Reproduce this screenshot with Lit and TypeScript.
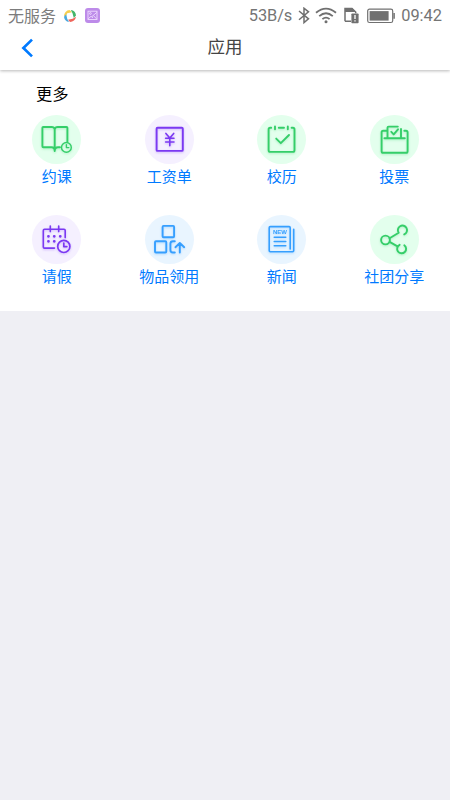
import { LitElement, html, css, svg } from "lit";
import { customElement } from "lit/decorators.js";

const clock = (x: number, y: number, r: number) => svg`
  <circle cx=${x} cy=${y} r=${r} />
  <path d="M${x} ${y - r * 0.55}V${y + 0.2}H${x + r * 0.5}" />`;

const apps = [
  { name: "约课", tone: "green", icon: svg`
    <path d="M22.7 14.2Q22.2 12 19.7 12H11.2Q10.4 12 10.4 12.8V31.3Q10.4 32.3 11.4 32.3H19.5Q22.7 32.3 22.7 36V14.2Q23.2 12 25.7 12H34.5Q35.4 12 35.4 12.8V26.4M28 32.3H26Q22.7 32.3 22.7 36" />
    <g stroke-width="1.4">${clock(34.4, 32.4, 4.9)}</g>` },
  { name: "工资单", tone: "purple", icon: svg`
    <rect x="11.6" y="12.7" width="26.2" height="23.2" rx="1" />
    <path d="M20.9 18.4L24.8 23L28.7 18.4M24.8 23V30.8M20.6 23.3H29M20.6 27H29" stroke-width="1.6" />` },
  { name: "校历", tone: "green", icon: svg`
    <path d="M14.2 12.8H13.2Q11.6 12.8 11.6 14.4V35.3Q11.6 36.9 13.2 36.9H35.9Q37.5 36.9 37.5 35.3V14.4Q37.5 12.8 35.9 12.8H34.6M18 11.4V14.2M30.8 11.4V14.2M21.8 12.8H27" />
    <path d="M19.2 23.6L23.8 28.2L32 20" />` },
  { name: "投票", tone: "green", icon: svg`
    <path d="M17.2 15.7H13.2Q11.6 15.7 11.6 17.3V36.2Q11.6 37.8 13.2 37.8H36Q37.6 37.8 37.6 36.2V17.3Q37.6 15.7 36 15.7H34.3M14.4 23.3H34.8M17.5 23V12.8Q17.5 11.6 18.7 11.6H27.8M31 14V23" />
    <path d="M21.3 16.8L23.7 19.4L28 14.3" />` },
  { name: "请假", tone: "purple", icon: svg`
    <path d="M33.2 22.6V15.5Q33.2 14.3 32 14.3H12.5Q11.3 14.3 11.3 15.5V31.9Q11.3 33.1 12.5 33.1H22.5M18.3 11V16.6M26.7 11V16.6" stroke-width="1.6" />
    <path d="M16.4 21.3h.1M22.2 21.3h.1M28.2 21.3h.1M16.4 26.3h.1M22.2 26.3h.1" stroke-width="2.7" />
    <g stroke-width="1.7">${clock(31.8, 31.4, 6.1)}</g>` },
  { name: "物品领用", tone: "blue", icon: svg`
    <rect x="17.6" y="10.9" width="11.5" height="11.4" rx="1" />
    <rect x="10" y="26.2" width="11.3" height="11.3" rx="1" />
    <path d="M29.8 26.2H27.9Q25.4 26.2 25.4 28.7V35Q25.4 37.5 27.9 37.5H29.8M34.8 37.6V28.2M30.4 32.2L34.8 27.9L39.2 32.2" />` },
  { name: "新闻", tone: "blue", icon: svg`
    <path d="M33.2 34V12.7Q33.2 11.6 32.1 11.6H13.3Q12.2 11.6 12.2 12.7V35.6Q12.2 36.7 13.3 36.7H35.6Q36.7 36.7 36.7 35.6V14.2" stroke-width="1.6" />
    <path d="M17.2 22.3H28.8M17.2 26.5H28.8M17.2 30.8H28.8" stroke-width="1.5" />
    <text x="22.9" y="19.3" text-anchor="middle" textLength="14">NEW</text>` },
  { name: "社团分享", tone: "green", icon: svg`
    <circle cx="15.5" cy="25" r="4.4" />
    <path d="M19.6 23.2L28.7 17.8A4.6 4.6 0 1 1 34.2 19.4M19.6 26.9L27.5 31.3M34.3 30.2A4.5 4.5 0 1 1 29.6 29.8" />` },
];

@customElement("app-root")
export class AppRoot extends LitElement {
  static styles = css`
    :host { display: block; height: 100vh; overflow: hidden; background: #efeff4; font-family: Roboto, "Noto Sans CJK SC", sans-serif; }
    svg { display: block; flex: none; }
    .header { height: 70px; background: #fff; box-shadow: 0 1px 3px rgba(0,0,0,.28); position: relative; }
    .status { display: flex; height: 30px; padding: 2px 8px 0; box-sizing: border-box; align-items: center; color: #757575; font-size: 16.4px; line-height: 28px; }
    .carrier { font-size: 16px; font-weight: 400; width: 48px; margin: 1px 7px 0 0; white-space: nowrap; color: #7c7c7c; }
    .photo { margin-left: 8px; margin-top: -2px; }
    .system { margin-left: auto; display: flex; align-items: center; }
    .rate { letter-spacing: -.1px; }
    .bluetooth { margin-left: 5px; }
    .wifi { margin-left: 4px; }
    .sim { margin-left: 7px; }
    .battery { margin-left: 8px; }
    .time { margin-left: 6px; }
    .nav { display: grid; grid-template-columns: 50px 1fr 50px; align-items: center; height: 35px; }
    .back { margin: 1px 0 0 20px; }
    .title { margin: -2px 0 0; text-align: center; font-size: 17.5px; line-height: 26px; font-weight: 400; color: #444; }
    .panel { background: #fff; height: 241px; box-sizing: border-box; padding-top: 12px; }
    .heading { margin: 0 0 7px 36px; font-size: 16.3px; line-height: 26px; font-weight: 400; color: #000; }
    .grid { display: grid; grid-template-columns: repeat(4, 112.5px); grid-auto-rows: 100px; margin-left: .4px; }
    .app { display: flex; flex-direction: column; align-items: center; gap: 1px; color: #007aff; font-size: 15px; line-height: 24px; white-space: nowrap; }
    .disc { width: 49px; height: 49px; border-radius: 50%; }
    .glyph { fill: none; stroke: currentColor; stroke-width: 1.9; stroke-linecap: round; stroke-linejoin: round; filter: drop-shadow(0 1px 1px color-mix(in srgb, currentColor 30%, transparent)); }
    .glyph text { font: 700 6px "Liberation Sans", sans-serif; fill: currentColor; stroke: none; }
    .green { color: #35ce69; background: #e3ffed; }
    .purple { color: #7b39f2; background: #f5f0ff; }
    .blue { color: #369fff; background: #e9f5ff; }
  `;

  render() {
    return html`
      <header class="header">
        <div class="status">
          <span class="carrier">无服务</span>
          <svg width="14" height="14" viewBox="0 0 14 14">
            <path d="M1 7A6 6 0 0 1 6.5 1L9 3.3L4.2 4.3L3 7Z" fill="#f6cf50" />
            <path d="M7.8 1A6 6 0 0 1 13 6.6L10.8 9L9.5 4.2Z" fill="#43b66a" />
            <path d="M13 7.8A6 6 0 0 1 7 13L5 10.8L9.7 9.7Z" fill="#ef655b" />
            <path d="M6 13A6 6 0 0 1 1 7.7L3.2 5.2L4.2 9.8Z" fill="#49a9df" />
          </svg>
          <svg class="photo" width="15" height="15" viewBox="0 0 15 15">
            <rect width="15" height="15" rx="3" fill="#bd8be9" />
            <g fill="none" stroke="#efdcff" stroke-width=".9">
              <rect x="3" y="3.2" width="9" height="8.3" />
              <circle cx="5.4" cy="5.5" r=".9" />
              <path d="M3.2 10.8L6 8.3L8 9.8M7 8.5L11.8 4.4M8.5 7.7L11.5 10.8" />
            </g>
          </svg>
          <div class="system">
            <span class="rate">53B/s</span>
            <svg class="bluetooth" width="14" height="18" viewBox="0 0 14 18" fill="none" stroke="#707070" stroke-width="1.5">
              <path d="M2 4L11.5 11.8L7 15.6V1.2L11.5 4.8L2 12.8" />
            </svg>
            <svg class="wifi" width="22" height="18" viewBox="0 0 22 18" fill="none" stroke="#707070" stroke-width="1.8">
              <path d="M1 5.8Q11 -2.6 21 5.8M4.2 9.1Q11 3.3 17.8 9.1M7.4 12.2Q11 9 14.6 12.2" />
              <circle cx="11" cy="14.8" r="1.5" fill="#707070" stroke="none" />
            </svg>
            <svg class="sim" width="15" height="18" viewBox="0 0 15 18">
              <path d="M1 14.2V1.4H8L11.7 5V6.2M1 14.2H7" fill="none" stroke="#707070" stroke-width="1.5" />
              <path d="M1 1H8L11.7 5H1Z" fill="#707070" />
              <rect x="7.4" y="6.4" width="7.2" height="9.8" rx=".8" fill="#707070" />
              <path d="M11 8V12M11 13.2V14.6" stroke="#fff" stroke-width="1.3" />
            </svg>
            <svg class="battery" width="28" height="16" viewBox="0 0 28 16">
              <rect x=".7" y="1.2" width="25" height="13.3" rx="1.8" fill="none" stroke="#707070" stroke-width="1.2" />
              <rect x="2.6" y="3.1" width="19" height="9.5" fill="#707070" />
              <path d="M27.1 5V10.7" stroke="#707070" stroke-width="1.5" />
            </svg>
            <span class="time">09:42</span>
          </div>
        </div>
        <nav class="nav">
          <svg class="back" width="14" height="20" viewBox="0 0 14 20">
            <path d="M12 1.6L3.4 10L12 18.4" fill="none" stroke="#007aff" stroke-width="2.7" />
          </svg>
          <h1 class="title">应用</h1>
        </nav>
      </header>
      <main class="panel">
        <h2 class="heading">更多</h2>
        <div class="grid">
          ${apps.map((a) => html`
            <div class="app">
              <div class="disc ${a.tone}">
                <svg class="glyph" width="49" height="49" viewBox="0 0 49 49">${a.icon}</svg>
              </div>
              <span>${a.name}</span>
            </div>`)}
        </div>
      </main>`;
  }
}
